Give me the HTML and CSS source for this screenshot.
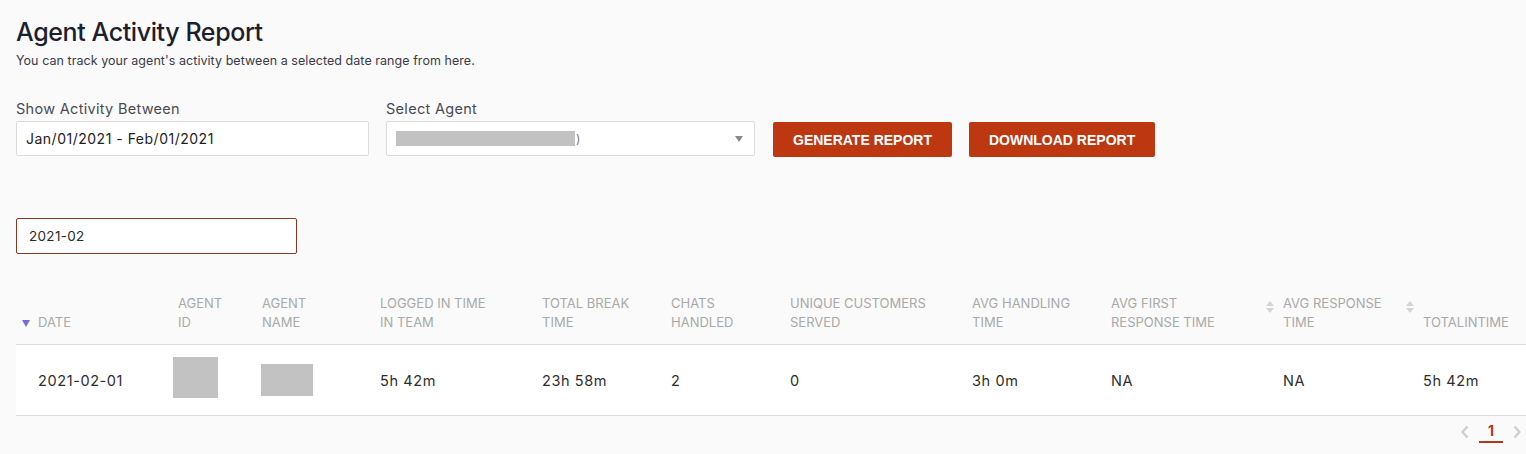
FILE: index.html
```html
<!DOCTYPE html>
<html>
<head>
<meta charset="utf-8">
<link rel="stylesheet" href="styles.css">
</head>
<body>
<div class="page">
  <h1 class="title">Agent Activity Report</h1>
  <p class="subtitle">You can track your agent's activity between a selected date range from here.</p>

  <div class="filters">
    <div class="field field-date">
      <label class="label">Show Activity Between</label>
      <div class="input">Jan/01/2021 - Feb/01/2021</div>
    </div>
    <div class="field field-agent">
      <label class="label">Select Agent</label>
      <div class="input select">
        <span class="redact-bar"></span><span class="paren">)</span>
        <span class="caret"></span>
      </div>
    </div>
    <button class="btn btn-first">GENERATE REPORT</button>
    <button class="btn">DOWNLOAD REPORT</button>
  </div>

  <div class="month-input">2021-02</div>

  <div class="table">
    <div class="row head">
      <div class="cell c-date"><span class="sort-active"></span>DATE</div>
      <div class="cell">AGENT<br>ID</div>
      <div class="cell">AGENT<br>NAME</div>
      <div class="cell">LOGGED IN TIME<br>IN TEAM</div>
      <div class="cell">TOTAL BREAK<br>TIME</div>
      <div class="cell">CHATS<br>HANDLED</div>
      <div class="cell">UNIQUE CUSTOMERS<br>SERVED</div>
      <div class="cell">AVG HANDLING<br>TIME</div>
      <div class="cell">AVG FIRST<br>RESPONSE TIME</div>
      <div class="cell c-sort"><span class="sorter"><i class="up"></i><i class="down"></i></span><span>AVG RESPONSE<br>TIME</span></div>
      <div class="cell c-sort"><span class="sorter"><i class="up"></i><i class="down"></i></span><span>TOTALINTIME</span></div>
    </div>
    <div class="row body">
      <div class="cell c-date">2021-02-01</div>
      <div class="cell"><span class="redact redact-id"></span></div>
      <div class="cell"><span class="redact redact-name"></span></div>
      <div class="cell">5h 42m</div>
      <div class="cell">23h 58m</div>
      <div class="cell">2</div>
      <div class="cell">0</div>
      <div class="cell">3h 0m</div>
      <div class="cell">NA</div>
      <div class="cell c-pad">NA</div>
      <div class="cell c-pad">5h 42m</div>
    </div>
  </div>

  <div class="pager">
    <svg class="chev" width="10" height="14" viewBox="0 0 10 14"><path d="M7.5 1.5 L2.5 7 L7.5 12.5" fill="none" stroke="#cfcfcf" stroke-width="2.4"/></svg>
    <span class="page-num">1</span>
    <svg class="chev" width="10" height="14" viewBox="0 0 10 14"><path d="M2.5 1.5 L7.5 7 L2.5 12.5" fill="none" stroke="#cfcfcf" stroke-width="2.4"/></svg>
  </div>
</div>
</body>
</html>
```

FILE: styles.css
```css
html, body {
  margin: 0;
  padding: 0;
  background: #fafafa;
}
body {
  font-family: "Inter", "Noto Sans", sans-serif;
  color: #222;
}
.page {
  padding: 16px 0 0 16px;
}
.title {
  margin: 0;
  font-size: 25px;
  font-weight: 500;
  letter-spacing: -0.4px;
  line-height: 32px;
  color: #1e1e2c;
}
.subtitle {
  margin: 5px 0 0;
  font-size: 12.5px;
  line-height: 16px;
  color: #3a3a4a;
  letter-spacing: 0.05px;
}
.filters {
  display: flex;
  align-items: flex-end;
  margin-top: 31px;
}
.field {
  display: flex;
  flex-direction: column;
}
.field-date { width: 353px; }
.field-agent { width: 369px; margin-left: 17px; }
.label {
  font-size: 14.5px;
  line-height: 18px;
  color: #4a4a55;
  margin-bottom: 3px;
  letter-spacing: 0.3px;
}
.input {
  box-sizing: border-box;
  height: 35px;
  background: #fff;
  border: 1px solid #dcdcdc;
  border-radius: 2px;
  font-size: 14px;
  line-height: 33px;
  padding-left: 9px;
  color: #222;
  letter-spacing: 0.5px;
}
.select {
  position: relative;
  display: flex;
  align-items: center;
}
.redact-bar {
  display: inline-block;
  width: 179px;
  height: 15px;
  background: #c2c2c2;
}
.paren {
  color: #777;
  font-size: 12px;
  margin-left: 1px;
}
.caret {
  position: absolute;
  right: 11px;
  top: 14px;
  width: 0;
  height: 0;
  border-left: 4px solid transparent;
  border-right: 4px solid transparent;
  border-top: 6px solid #888;
}
.btn {
  height: 35px;
  margin-left: 17px;
  margin-bottom: -1px;
  padding: 0 20px;
  background: #bd3811;
  color: #fff;
  border: none;
  border-radius: 2px;
  font-family: "Liberation Sans", Arial, sans-serif;
  font-weight: bold;
  font-size: 14px;
  letter-spacing: 0;
}
.btn-first {
  margin-left: 18px;
}
.month-input {
  box-sizing: border-box;
  width: 281px;
  height: 36px;
  margin-top: 62px;
  background: #fff;
  border: 1px solid #8a3620;
  border-radius: 2px;
  font-size: 13.5px;
  line-height: 34px;
  padding-left: 12px;
  color: #2a2a2a;
  letter-spacing: 0.3px;
}
.table {
  margin-top: 40px;
}
.row {
  display: grid;
  grid-template-columns: 162px 84px 118px 162px 129px 119px 182px 139px 153px 140px 1fr;
}
.head {
  height: 50px;
  border-bottom: 1px solid #dddddd;
  align-items: end;
}
.head .cell {
  font-size: 13px;
  line-height: 19px;
  color: #a9a9a9;
  padding-bottom: 12px;
  letter-spacing: 0;
}
.c-date {
  padding-left: 22px;
  position: relative;
}
.sort-active {
  position: absolute;
  left: 6px;
  bottom: 17px;
  width: 0;
  height: 0;
  border-left: 4px solid transparent;
  border-right: 4px solid transparent;
  border-top: 7px solid #6f6fd4;
}
.c-sort {
  display: flex;
  align-items: center;
}
.head .c-sort {
  align-self: stretch;
  align-items: flex-end;
}
.sorter {
  display: flex;
  flex-direction: column;
  gap: 2px;
  margin: 0 9px 19px 2px;
}
.sorter i {
  display: block;
  width: 0;
  height: 0;
  border-left: 4px solid transparent;
  border-right: 4px solid transparent;
}
.sorter .up { border-bottom: 5px solid #d4d4d4; }
.sorter .down { border-top: 5px solid #d4d4d4; }
.body {
  height: 70px;
  background: #fff;
  border-bottom: 1px solid #dddddd;
  align-items: center;
}
.body .cell {
  font-size: 14.5px;
  color: #2e2e2e;
  letter-spacing: 0.6px;
}
.c-pad {
  padding-left: 19px;
}
.redact {
  display: block;
  background: #c2c2c2;
}
.redact-id {
  width: 45px;
  height: 41px;
  margin-left: -5px;
  margin-top: -5px;
}
.redact-name {
  width: 52px;
  height: 32px;
  margin-left: -1px;
  margin-top: 0;
}
.pager {
  display: flex;
  justify-content: flex-end;
  align-items: center;
  gap: 9px;
  padding-right: 4px;
  margin-top: 5px;
}
.chev {
  display: block;
}
.page-num {
  font-size: 14px;
  font-weight: 700;
  color: #b5361a;
  width: 24px;
  text-align: center;
  line-height: 20px;
  border-bottom: 2px solid #b5361a;
}
```
